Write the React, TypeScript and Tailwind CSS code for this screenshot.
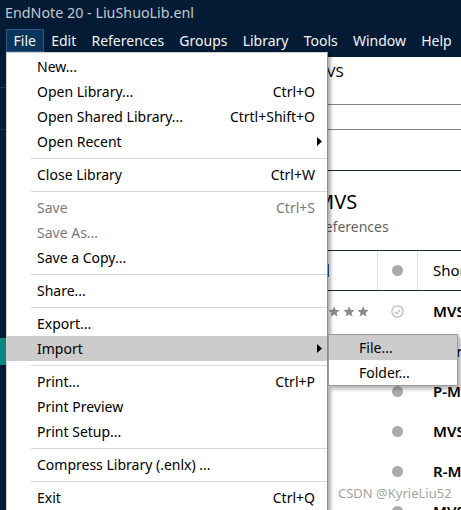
import type { ReactNode } from 'react';

type Item =
  | { sep: true }
  | { label: string; sc?: string; sub?: boolean; disabled?: boolean; active?: boolean };

const fileMenu: Item[] = [
  { label: 'New...' },
  { label: 'Open Library...', sc: 'Ctrl+O' },
  { label: 'Open Shared Library...', sc: 'Ctrtl+Shift+O' },
  { label: 'Open Recent', sub: true },
  { sep: true },
  { label: 'Close Library', sc: 'Ctrl+W' },
  { sep: true },
  { label: 'Save', sc: 'Ctrl+S', disabled: true },
  { label: 'Save As...', disabled: true },
  { label: 'Save a Copy...' },
  { sep: true },
  { label: 'Share...' },
  { sep: true },
  { label: 'Export...' },
  { label: 'Import', sub: true, active: true },
  { sep: true },
  { label: 'Print...', sc: 'Ctrl+P' },
  { label: 'Print Preview' },
  { label: 'Print Setup...' },
  { sep: true },
  { label: 'Compress Library (.enlx) ...' },
  { sep: true },
  { label: 'Exit', sc: 'Ctrl+Q' },
];

const menuBar = ['File', 'Edit', 'References', 'Groups', 'Library', 'Tools', 'Window', 'Help'];

const rows = [
  { title: 'MVSNet', read: true, stars: true },
  { title: 'Point-MVSNet' },
  { title: 'P-MVSNet' },
  { title: 'MVSNet' },
  { title: 'R-MVSNet' },
  { title: 'MVSCRF' },
];

function Arrow() {
  return (
    <svg width="5" height="9" viewBox="0 0 5 9">
      <path d="M0 0L5 4.5L0 9Z" fill="#000" />
    </svg>
  );
}

function Star() {
  return (
    <svg width="13" height="13" viewBox="0 0 24 24">
      <path d="M12 1.5l3.1 7.1 7.7.7-5.8 5.1 1.7 7.6L12 18l-6.7 4 1.7-7.6L1.2 9.3l7.7-.7z" fill="#8c8c8c" />
    </svg>
  );
}

function ReadCheck() {
  return (
    <svg width="13" height="13" viewBox="0 0 13 13">
      <circle cx="6.5" cy="6.5" r="5.6" fill="none" stroke="#b9b9b9" strokeWidth="1.2" />
      <path d="M3.9 6.8l1.8 1.8 3.4-3.6" fill="none" stroke="#b9b9b9" strokeWidth="1.2" />
    </svg>
  );
}

function Dot() {
  return <span className="block w-[11px] h-[11px] rounded-full bg-[#aaaaaa]" />;
}

function Row({ children }: { children: ReactNode }) {
  return <div className="flex h-[40px] items-center shrink-0">{children}</div>;
}

export default function App() {
  return (
    <div className="relative w-[461px] h-[510px] overflow-hidden bg-white font-['Noto_Sans',sans-serif] text-black">
      {/* window chrome */}
      <div className="bg-[#031b35]">
        <div className="h-[25px] pl-[5px] flex items-center text-[14.3px] text-[#c3c8cf]">EndNote 20 - LiuShuoLib.enl</div>
        <div className="h-[28px] pl-[6px] pt-[4px] flex items-start">
          {menuBar.map((m, i) => (
            <div
              key={m}
              className={`h-[23px] px-[6.6px] flex items-center border text-[14px] text-[#f2f4f7] ${
                i === 0 ? 'bg-[#0b345c] border-[#2a5983]' : 'border-transparent'
              }`}
            >
              {m}
            </div>
          ))}
        </div>
        <div className="h-[4px]" />
      </div>

      {/* library window behind the menu */}
      <div className="flex h-[453px]">
        <div className="w-[300px] shrink-0 bg-[#031b35] flex flex-col">
          <div className="h-[31px] border-b border-[#1d3450]" />
          <div className="h-[42px] border-b border-[#1d3450]" />
          <div className="h-[208px]" />
          <div className="h-[27px] bg-[#0a8580]" />
        </div>
        <div className="flex-1 min-w-0 flex flex-col overflow-hidden">
          <div className="h-[48px] shrink-0 border-b border-[#828282] pl-[13px] pt-[3px] text-[15px]">MVS</div>
          <div className="h-[25px] shrink-0 border-b border-[#828282]" />
          <div className="h-[41px] shrink-0 border-b border-[#1c2b40]" />
          <div className="h-[80px] shrink-0 border-b border-[#1c2b40] pl-[16px] pt-[18px] flex flex-col">
            <span className="text-[20px] leading-[26px]">MVS</span>
            <span className="text-[14px] leading-[24px] text-[#5f5f5f]">References</span>
          </div>
          <div className="flex h-[40px] shrink-0 border-b border-[#1c2b40] items-center">
            <div className="w-[77px] shrink-0 h-full pl-[27px] flex items-center">
              <span className="w-[2px] h-[13px] bg-[#1c5aa6]" />
            </div>
            <div className="w-[40px] shrink-0 h-full border-l border-[#e6e6e6] flex items-center justify-center">
              <Dot />
            </div>
            <div className="flex-1 min-w-0 h-full border-l border-[#e6e6e6] pl-[15px] flex items-center text-[15px] whitespace-nowrap overflow-hidden">
              Short Title
            </div>
          </div>
          {rows.map((r, i) => (
            <Row key={i}>
              <div className="w-[77px] shrink-0 flex justify-end gap-[2px] pr-[8px]">
                {r.stars && (
                  <>
                    <Star />
                    <Star />
                    <Star />
                    <Star />
                    <Star />
                  </>
                )}
              </div>
              <div className="w-[40px] shrink-0 flex items-center justify-center">{r.read ? <ReadCheck /> : <Dot />}</div>
              <div className="flex-1 min-w-0 pl-[16px] text-[15px] font-semibold whitespace-nowrap overflow-hidden">{r.title}</div>
            </Row>
          ))}
        </div>
      </div>

      {/* File dropdown */}
      <div className="absolute left-[6px] top-[52px] w-[322px] h-[470px] bg-white border border-[#cfcfcf] border-r-[#8f8f8f] shadow-[3px_2px_3px_rgba(0,0,0,0.3)] pt-[1px]">
        {fileMenu.map((it, i) =>
          'sep' in it ? (
            <div key={i} className="h-[8px] flex items-center pl-[24px]">
              <div className="w-full h-px bg-[#d7d7d7]" />
            </div>
          ) : (
            <div
              key={i}
              className={`h-[25px] flex items-center pl-[30px] text-[14px] ${it.active ? 'bg-[#cccccc]' : ''} ${
                it.disabled ? 'text-[#7a7a7a]' : 'text-black'
              }`}
            >
              <span className="flex-1 whitespace-nowrap">{it.label}</span>
              {it.sc && <span className="whitespace-nowrap">{it.sc}</span>}
              <span className="w-[12px] pl-[2px] flex items-center">{it.sub && <Arrow />}</span>
            </div>
          )
        )}
      </div>

      {/* Import submenu */}
      <div className="absolute left-[328px] top-[334px] w-[130px] bg-white border border-[#9a9a9a] shadow-[3px_3px_4px_rgba(0,0,0,0.3)]">
        <div className="h-[25px] flex items-center pl-[30px] text-[14px] bg-[#cccccc]">File...</div>
        <div className="h-[25px] flex items-center pl-[30px] text-[14px]">Folder...</div>
      </div>

      <div className="absolute left-[338px] top-[484px] text-[13px] text-[#a3a3a3]">CSDN @KyrieLiu52</div>
    </div>
  );
}
